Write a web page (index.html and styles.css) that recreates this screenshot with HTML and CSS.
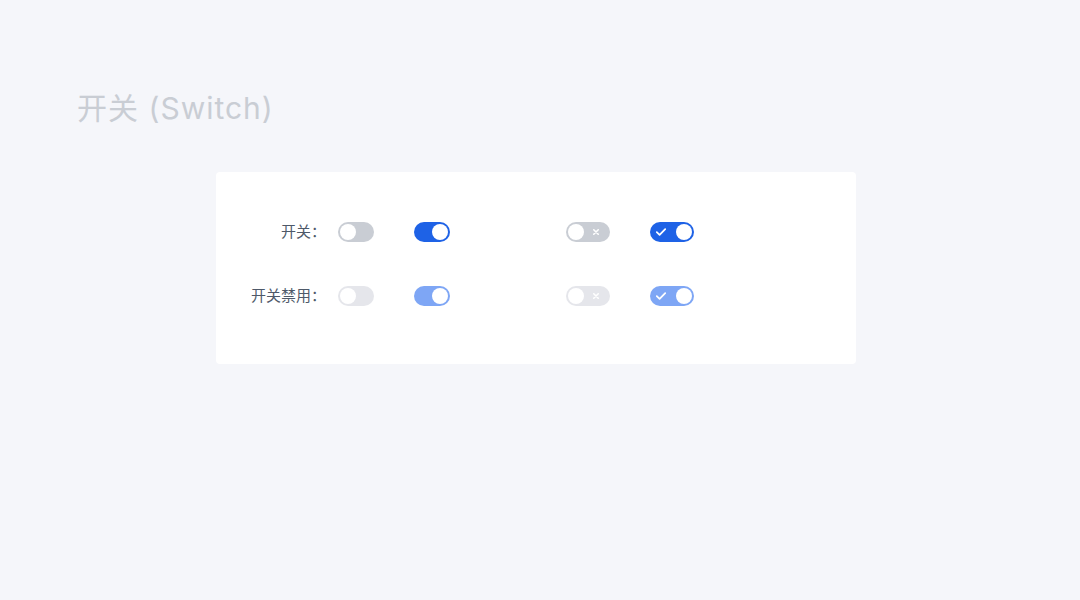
FILE: index.html
```html
<!DOCTYPE html>
<html lang="zh-CN">
<head>
  <meta charset="UTF-8">
  <title>开关 (Switch)</title>
  <link rel="stylesheet" href="styles.css">
</head>
<body>

<div class="page">
  <h1 class="title">开关 (Switch)</h1>

  <div class="card">
    <div class="grid">
      <div class="label">开关：</div>
      <div class="cell"><span class="switch"></span></div>
      <div class="cell"><span class="switch on"></span></div>
      <div class="cell">
        <span class="switch wide">
          <svg class="icon icon-x" viewBox="0 0 10 10"><path d="M2.2 2.2l5.6 5.6M7.8 2.2l-5.6 5.6"/></svg>
        </span>
      </div>
      <div class="cell">
        <span class="switch wide on">
          <svg class="icon icon-check" viewBox="0 0 10 10"><path d="M0.8 5.2l2.8 2.6 5.6-5.6"/></svg>
        </span>
      </div>

      <div class="label">开关禁用：</div>
      <div class="cell"><span class="switch disabled"></span></div>
      <div class="cell"><span class="switch on disabled"></span></div>
      <div class="cell">
        <span class="switch wide disabled">
          <svg class="icon icon-x" viewBox="0 0 10 10"><path d="M2.2 2.2l5.6 5.6M7.8 2.2l-5.6 5.6"/></svg>
        </span>
      </div>
      <div class="cell">
        <span class="switch wide on disabled">
          <svg class="icon icon-check" viewBox="0 0 10 10"><path d="M0.8 5.2l2.8 2.6 5.6-5.6"/></svg>
        </span>
      </div>
    </div>
  </div>
</div>

</body>
</html>
```

FILE: styles.css
```css
body {
  margin: 0;
  background-color: #f5f6fa;
  font-family: Inter, "Noto Sans CJK SC", sans-serif;
}

.page {
  padding: 88px 0 0 77px;
}

.title {
  margin: 0;
  font-size: 30px;
  font-weight: 400;
  line-height: 40px;
  letter-spacing: 1px;
  color: #c9cdd4;
}

.card {
  width: 640px;
  height: 192px;
  margin: 44px 0 0 139px;
  background-color: #fff;
  border-radius: 4px;
  box-sizing: border-box;
  padding-top: 50px;
}

.grid {
  display: grid;
  grid-template-columns: 122px 76px 152px 84px 1fr;
  row-gap: 44px;
  align-items: center;
}

.label {
  padding-right: 12px;
  text-align: right;
  font-size: 15px;
  line-height: 20px;
  color: #4e5969;
}

.cell {
  height: 20px;
  display: flex;
  align-items: center;
}

.switch {
  position: relative;
  display: inline-block;
  width: 36px;
  height: 20px;
  border-radius: 10px;
  background-color: #c9cdd4;
}

.switch::after {
  content: "";
  position: absolute;
  top: 2px;
  left: 2px;
  width: 16px;
  height: 16px;
  border-radius: 50%;
  background-color: #fff;
}

.switch.on {
  background-color: #1e62e6;
}

.switch.on::after {
  left: auto;
  right: 2px;
}

.switch.wide {
  width: 44px;
}

.switch.disabled {
  background-color: #e5e6eb;
}

.switch.on.disabled {
  background-color: #7ea6f5;
}

.icon {
  position: absolute;
  fill: none;
  stroke: #fff;
  stroke-linecap: round;
  stroke-linejoin: round;
}

.icon-x {
  top: 6px;
  right: 10px;
  width: 8px;
  height: 8px;
  stroke-width: 2;
}

.icon-check {
  top: 5px;
  left: 6px;
  width: 10px;
  height: 10px;
  stroke-width: 1.8;
}
```
